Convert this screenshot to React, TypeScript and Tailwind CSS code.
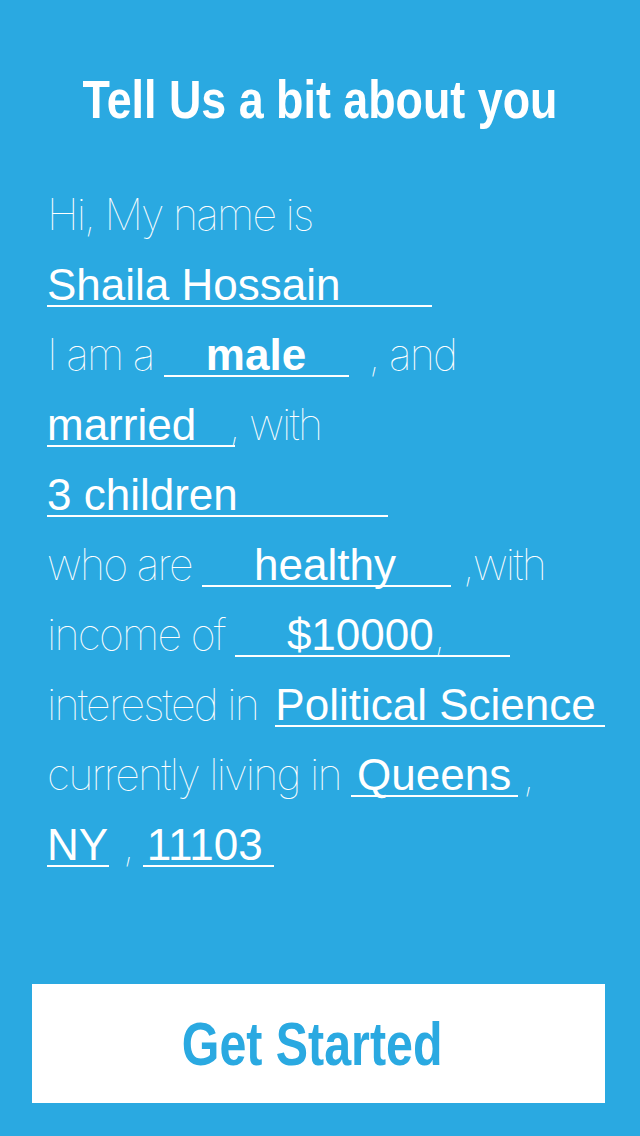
import React from "react";

const label = "font-['Inter',sans-serif] font-thin text-white tracking-[-1.8px]";
const field =
  "inline-block border-b-2 border-white leading-[40px] font-['Liberation_Sans',Arial,sans-serif] text-[44px] text-white whitespace-pre tracking-normal";

function Field({
  value,
  width,
  pad = 0,
  bold = false,
  children,
}: {
  value: string;
  width: number;
  pad?: number;
  bold?: boolean;
  children?: React.ReactNode;
}) {
  return (
    <span
      className={bold ? field + " font-bold" : field}
      style={{ width, paddingLeft: pad }}
    >
      {value}
      {children}
    </span>
  );
}

export default function App() {
  return (
    <div className="flex h-[1136px] w-[640px] flex-col bg-[#2aa9e1]">
      <div className="pt-[67px] text-center">
        <h1 className="inline-block origin-center scale-x-[0.83] font-['Liberation_Sans',Arial,sans-serif] text-[54px] leading-[64px] font-bold whitespace-nowrap text-white">
          Tell Us a bit about you
        </h1>
      </div>
      <div className="mt-[48px] pl-[47px] text-[43px] leading-[70px]">
        <div className={label}>Hi, My name is</div>
        <div>
          <Field value="Shaila Hossain" width={385} />
        </div>
        <div className={label}>
          I am a <Field value="male" width={185} pad={42} bold />
          <span className="ml-[20px]">, and</span>
        </div>
        <div className={label}>
          <Field value="married" width={188} />
          <span className="-ml-[6px]">, with</span>
        </div>
        <div>
          <Field value="3 children" width={341} />
        </div>
        <div className={label}>
          who are <Field value="healthy" width={249} pad={52} />
          <span className="ml-[12px]">,with</span>
        </div>
        <div className={label}>
          income of{" "}
          <Field value="$10000" width={275} pad={52}>
            <span className="font-['Inter',sans-serif] font-thin">,</span>
          </Field>
        </div>
        <div className={label}>
          interested in{" "}
          <span className="ml-[7px]">
            <Field value="Political Science" width={330} />
          </span>
        </div>
        <div className={label}>
          currently living in <Field value="Queens" width={167} pad={6} />
          <span className="ml-[5px]">,</span>
        </div>
        <div className={label}>
          <Field value="NY" width={62} />
          <span className="mr-[10px] ml-[14px]">,</span>
          <Field value="11103" width={131} pad={4} />
        </div>
      </div>
      <div className="mt-auto pb-[33px] pl-[32px]">
        <button className="flex h-[119px] w-[573px] items-center justify-center bg-white pr-[12px]">
          <span className="inline-block origin-center scale-x-[0.78] font-['Liberation_Sans',Arial,sans-serif] text-[62px] font-bold whitespace-nowrap text-[#2aa9e1]">
            Get Started
          </span>
        </button>
      </div>
    </div>
  );
}
